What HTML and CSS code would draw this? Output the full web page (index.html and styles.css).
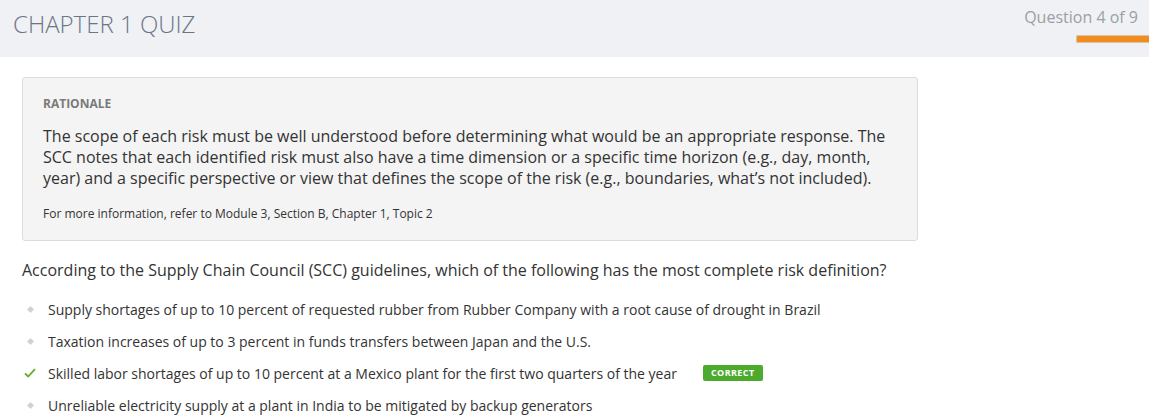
FILE: index.html
```html
<!DOCTYPE html>
<html>
<head>
<meta charset="utf-8">
<link rel="stylesheet" href="styles.css">
</head>
<body>
<header class="topbar">
  <h1 class="title">CHAPTER 1 QUIZ</h1>
  <div class="progress">
    <div class="progress-label">Question 4 of 9</div>
    <div class="progress-bar"></div>
  </div>
</header>
<main class="content">
  <section class="rationale">
    <div class="rationale-head">RATIONALE</div>
    <p class="rationale-text">The scope of each risk must be well understood before determining what would be an appropriate response. The SCC notes that each identified risk must also have a time dimension or a specific time horizon (e.g., day, month, year) and a specific perspective or view that defines the scope of the risk (e.g., boundaries, what’s not included).</p>
    <p class="rationale-ref">For more information, refer to Module 3, Section B, Chapter 1, Topic 2</p>
  </section>
  <p class="question">According to the Supply Chain Council (SCC) guidelines, which of the following has the most complete risk definition?</p>
  <ul class="options">
    <li class="option"><span class="marker"><span class="dot"></span></span><span class="opt-text">Supply shortages of up to 10 percent of requested rubber from Rubber Company with a root cause of drought in Brazil</span></li>
    <li class="option"><span class="marker"><span class="dot"></span></span><span class="opt-text">Taxation increases of up to 3 percent in funds transfers between Japan and the U.S.</span></li>
    <li class="option"><span class="marker"><svg class="check" width="12" height="10" viewBox="0 0 12 10"><path d="M1 5.5 L4.2 8.5 L11 1.2" fill="none" stroke="#6aaa2a" stroke-width="1.8"/></svg></span><span class="opt-text">Skilled labor shortages of up to 10 percent at a Mexico plant for the first two quarters of the year</span><span class="badge">CORRECT</span></li>
    <li class="option"><span class="marker"><span class="dot"></span></span><span class="opt-text">Unreliable electricity supply at a plant in India to be mitigated by backup generators</span></li>
  </ul>
</main>
</body>
</html>
```
FILE: styles.css
```css
* { box-sizing: border-box; }
html, body { margin: 0; padding: 0; }
body {
  font-family: "Open Sans", "Liberation Sans", sans-serif;
  background: #ffffff;
  color: #333;
  width: 1149px;
}
.topbar {
  height: 57px;
  background: #eff1f5;
  display: flex;
  justify-content: space-between;
  align-items: flex-start;
}
.title {
  margin: 0;
  padding: 8px 0 0 13px;
  font-weight: 300;
  font-size: 24px;
  line-height: 32px;
  color: #6b7685;
  letter-spacing: 0;
}
.progress {
  display: flex;
  flex-direction: column;
  align-items: flex-end;
}
.progress-label {
  padding: 5px 11px 0 0;
  font-size: 16px;
  line-height: 24px;
  color: #9aa0a6;
}
.progress-bar {
  margin-top: 6px;
  width: 73px;
  height: 8px;
  background: #f28c1e;
  border: 1px solid #d9c3a8;
  border-right: none;
  border-radius: 2px 0 0 2px;
}
.content {
  padding: 20px 0 0 22px;
}
.rationale {
  width: 896px;
  background: #f4f4f4;
  border: 1px solid #dcdcdc;
  border-radius: 3px;
  padding: 17px 20px 18px 20px;
}
.rationale-head {
  font-size: 12px;
  font-weight: 700;
  color: #7a7a7a;
  line-height: 18px;
}
.rationale-text {
  margin: 13px 0 0 0;
  font-size: 16px;
  line-height: 21px;
  color: #333;
}
.rationale-ref {
  margin: 16px 0 0 0;
  font-size: 12px;
  line-height: 17px;
  color: #333;
}
.question {
  margin: 17px 0 0 0;
  font-size: 16px;
  line-height: 24px;
  color: #333;
}
.options {
  list-style: none;
  margin: 11px 0 0 0;
  padding: 0;
}
.option {
  display: flex;
  align-items: center;
  height: 32px;
  font-size: 14px;
  color: #333;
}
.marker {
  width: 26px;
  display: flex;
  align-items: center;
  justify-content: center;
  margin-left: -5px;
  margin-right: 5px;
}
.dot {
  width: 5px;
  height: 5px;
  background: #d2d2d2;
  transform: rotate(45deg);
  display: block;
}
.check { display: block; }
.badge {
  margin-left: 26px;
  background: #4caa2c;
  color: #fff;
  font-size: 9px;
  font-weight: 700;
  letter-spacing: 0.4px;
  line-height: 16px;
  height: 16px;
  padding: 0 8px;
  border-radius: 2px;
}
```
